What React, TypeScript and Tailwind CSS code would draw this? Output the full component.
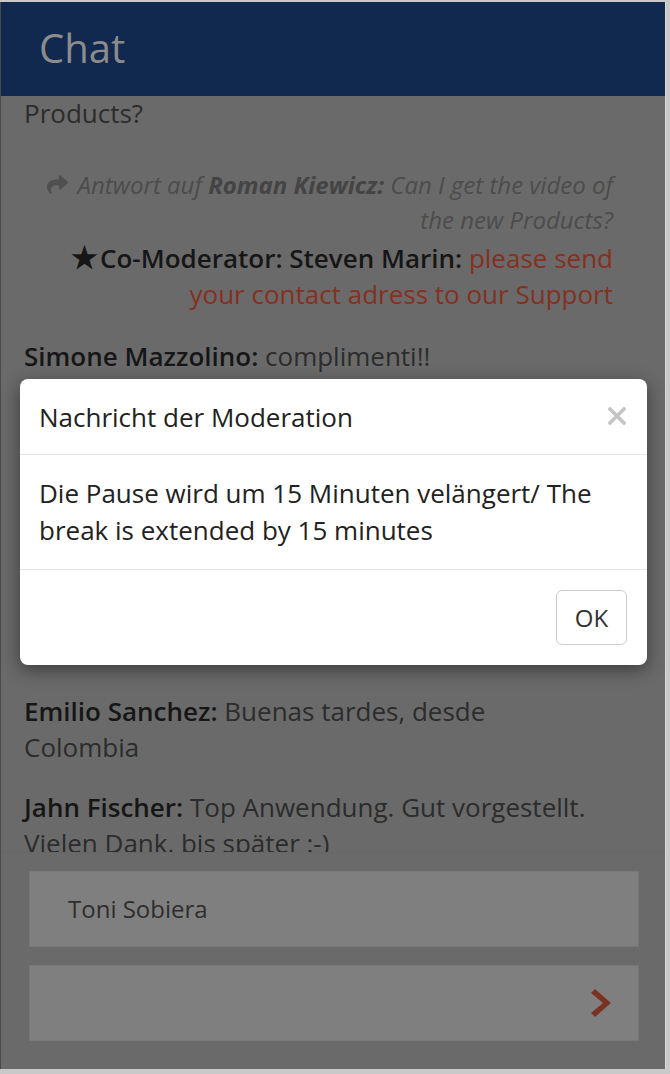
import React from "react";
import { FaShare } from "react-icons/fa";

export default function App() {
  return (
    <div
      className="w-[670px] h-[1074px] bg-[#c9c9c9] pt-[2px] overflow-hidden"
      style={{ fontFamily: '"Open Sans", "Noto Sans", sans-serif' }}
    >
      <div className="relative w-[666px] h-[1067px] bg-[#6a6a6a] flex flex-col border-l border-[#4a4a4a] border-r border-r-[#dcdcdc]">
        {/* Header */}
        <div className="h-[94px] shrink-0 bg-[#11284f] flex items-center pl-[38px]">
          <span className="text-[40px] leading-none text-[#8c8c8c] -mt-[2px]">Chat</span>
        </div>

        {/* Chat messages */}
        <div className="h-[756px] shrink-0 overflow-hidden pl-[23px] text-[26px] leading-[36px] text-[#2c2c2c]">
          <div className="mr-[69px] -mt-[1px]">Products?</div>

          <div className="mt-[36px] mr-[52px] text-right">
            <div className="text-[24px] leading-[35px] italic text-[#4c4c4c]">
              <FaShare className="inline-block w-[21px] h-[21px] mr-[10px] -mt-[6px] text-[#505050]" />
              Antwort auf <span className="font-bold text-[#444444]">Roman Kiewicz:</span> Can I get the video of the new Products?
            </div>
            <div className="mt-[3px]">
              <span className="font-semibold text-[#161616]">
                <span className="text-[30px] leading-none mr-[2px]">★</span>Co-Moderator: Steven Marin:
              </span>{" "}
              <span className="text-[#86301f]">please send your contact adress to our Support</span>
            </div>
          </div>

          <div className="mt-[26px] mr-[69px]">
            <span className="font-semibold text-[#161616]">Simone Mazzolino:</span> complimenti!!
          </div>

          <div className="h-[319px]" />

          <div className="mr-[69px]">
            <span className="font-semibold text-[#161616]">Emilio Sanchez:</span> Buenas tardes, desde Colombia
          </div>

          <div className="mt-[24px] mr-[69px]">
            <span className="font-semibold text-[#161616]">Jahn Fischer:</span> Top Anwendung. Gut vorgestellt. Vielen Dank, bis später :-)
          </div>
        </div>

        {/* Input area */}
        <div className="flex-1 border-t border-[#676767] pl-[28px] pr-[26px] pt-[18px] flex flex-col gap-[18px]">
          <div className="h-[76px] bg-[#7f7f7f] border border-[#777777] flex items-center pl-[38px] text-[24px] text-[#2e2e2e]">
            Toni Sobiera
          </div>
          <div className="h-[76px] bg-[#7f7f7f] border border-[#777777] flex items-center justify-end pr-[27px]">
            <svg width="21" height="28" viewBox="0 0 21 28">
              <path d="M1 4 L5 0 L21 14 L5 28 L1 24 L13 14 Z" fill="#7a3222" />
            </svg>
          </div>
        </div>

        {/* Modal */}
        <div className="absolute left-[19px] top-[377px] w-[627px] bg-white rounded-[8px] shadow-[0_5px_18px_rgba(0,0,0,0.45)] text-[#222]">
          <div className="h-[76px] px-[19px] flex items-center justify-between border-b border-[#e5e5e5]">
            <span className="text-[26px] leading-[36px]">Nachricht der Moderation</span>
            <svg width="18" height="18" viewBox="0 0 18 18" className="mr-[2px] -mt-[2px]">
              <path d="M2 2 L16 16 M16 2 L2 16" stroke="#c4c4c4" strokeWidth="3.4" strokeLinecap="square" />
            </svg>
          </div>
          <div className="px-[19px] pt-[20px] pb-[20px] text-[26px] leading-[37px] border-b border-[#e5e5e5]">
            Die Pause wird um 15 Minuten velängert/ The break is extended by 15 minutes
          </div>
          <div className="p-[20px] flex justify-end">
            <button className="w-[71px] h-[55px] border border-[#cccccc] rounded-[6px] bg-white text-[24px] text-[#333]">
              OK
            </button>
          </div>
        </div>
      </div>
    </div>
  );
}
